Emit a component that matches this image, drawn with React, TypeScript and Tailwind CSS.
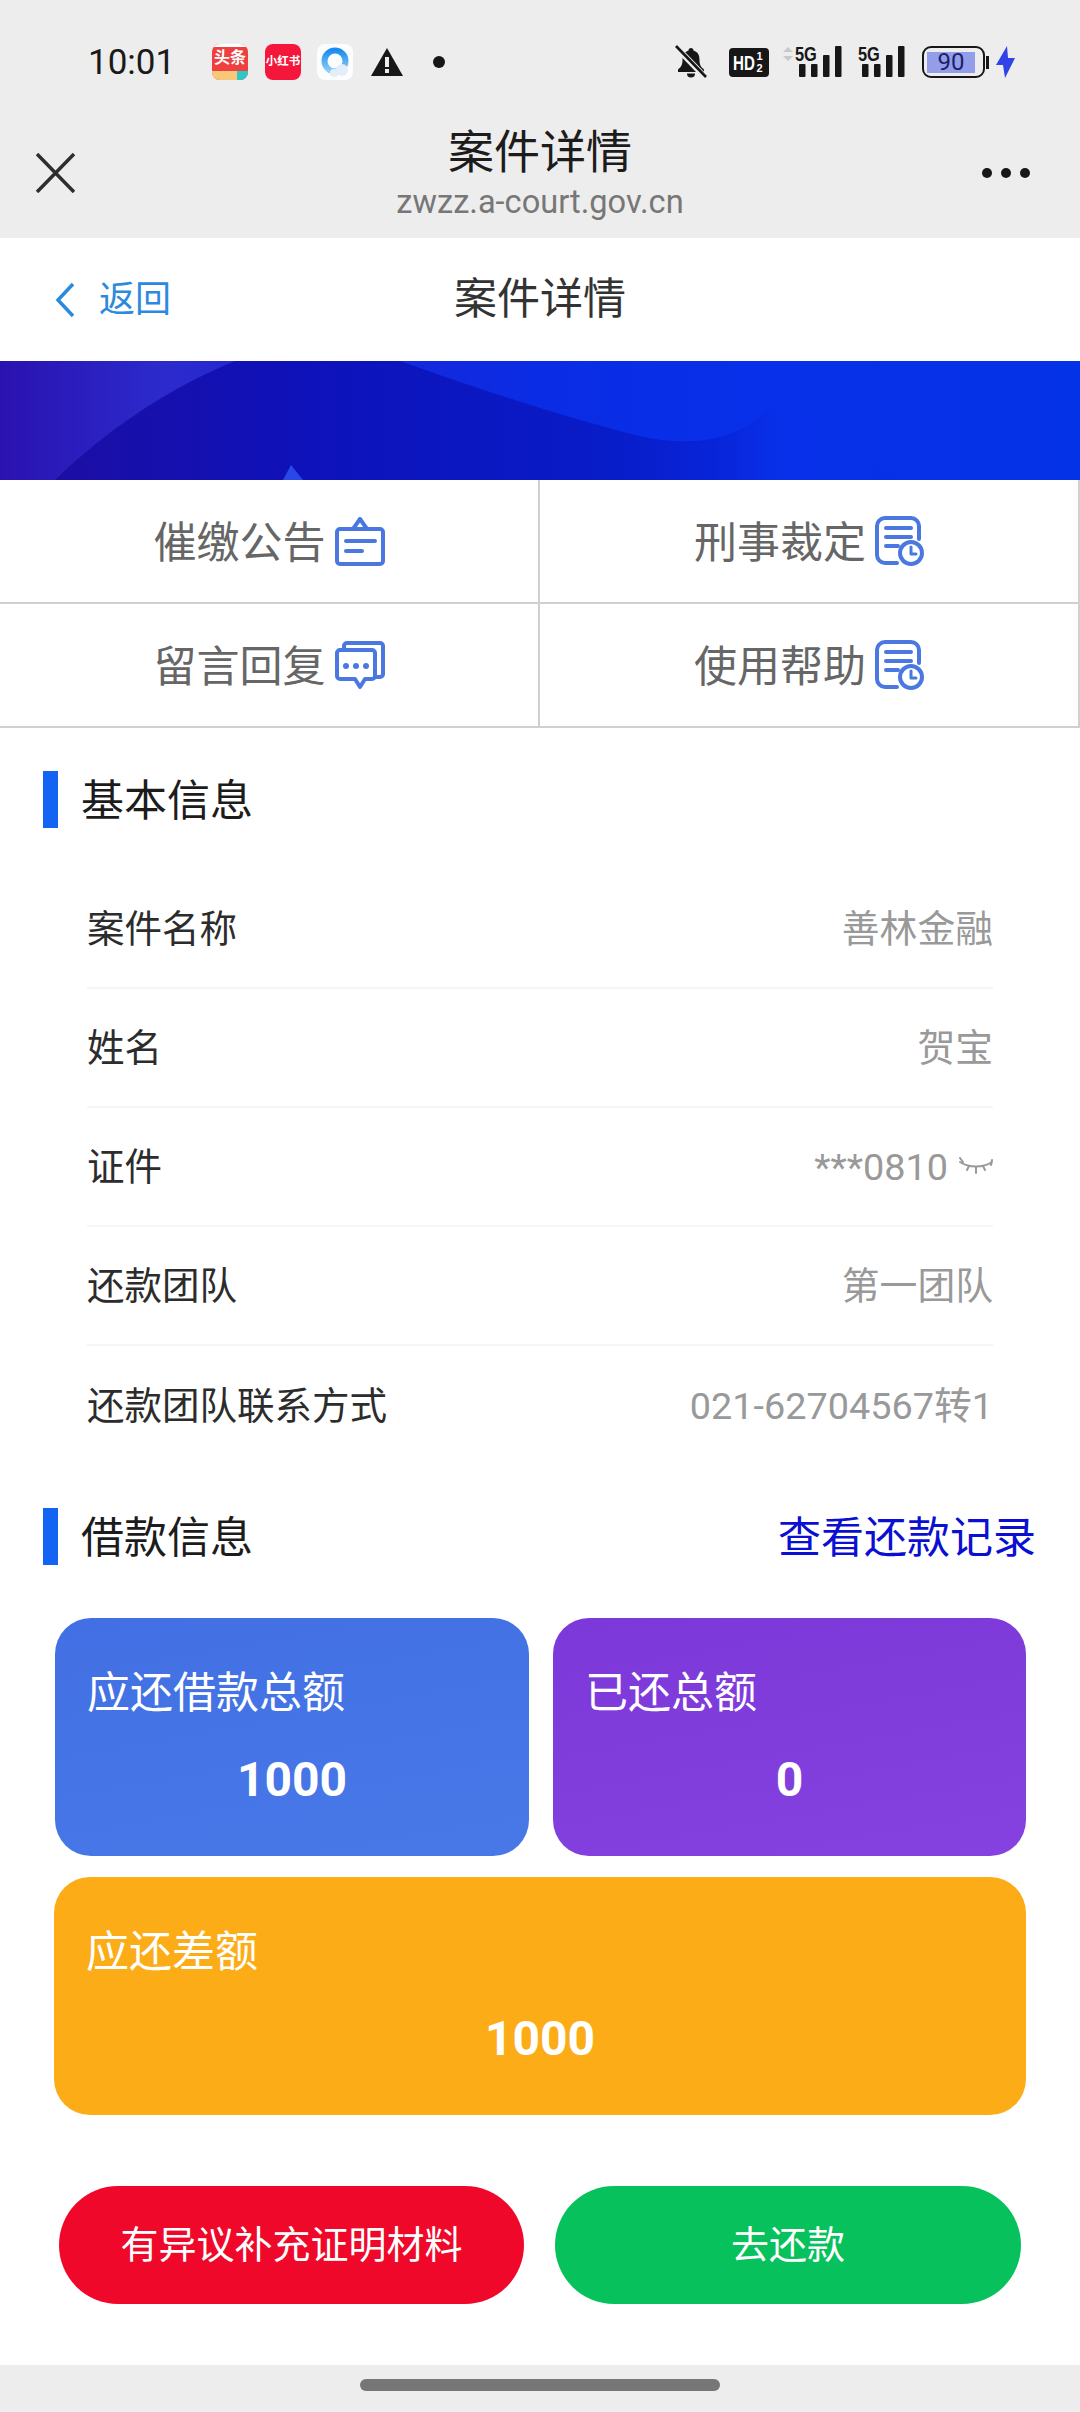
import React from "react";

const Clock = () => (
  <svg width="49" height="50" viewBox="0 0 49 50" fill="none" stroke="#4a78e0" strokeWidth="4" strokeLinecap="round" strokeLinejoin="round">
    <path d="M22 47H10a8 8 0 0 1-8-8V10a8 8 0 0 1 8-8h26a8 8 0 0 1 8 8v13" />
    <path d="M11 12h25M11 21h25M11 30h12" />
    <circle cx="36" cy="37" r="11" />
    <path d="M36 31v7h5" strokeWidth="3" />
  </svg>
);
const Notice = () => (
  <svg width="50" height="49" viewBox="0 0 50 49" fill="none" stroke="#4a78e0" strokeWidth="4" strokeLinecap="round" strokeLinejoin="round">
    <path d="M5 12h40a3 3 0 0 1 3 3v29a3 3 0 0 1-3 3H5a3 3 0 0 1-3-3V15a3 3 0 0 1 3-3Z" />
    <path d="M18 12l7-10 7 10" />
    <path d="M11 24h29M11 34h16" />
  </svg>
);
const Chat = () => (
  <svg width="50" height="49" viewBox="0 0 50 49" fill="none" stroke="#4a78e0" strokeWidth="4" strokeLinecap="round" strokeLinejoin="round">
    <path d="M9 8V5a3 3 0 0 1 3-3h33a3 3 0 0 1 3 3v28a3 3 0 0 1-3 3h-5" />
    <path d="M5 9h32a3 3 0 0 1 3 3v23a3 3 0 0 1-3 3h-7l-5 8-5-8H5a3 3 0 0 1-3-3V12a3 3 0 0 1 3-3Z" />
    <circle cx="11" cy="25" r="3" fill="#4a78e0" stroke="none" />
    <circle cx="21" cy="25" r="3" fill="#4a78e0" stroke="none" />
    <circle cx="31" cy="25" r="3" fill="#4a78e0" stroke="none" />
  </svg>
);

const Signal = ({ arrows }: { arrows?: boolean }) => (
  <svg className="overflow-visible" width={arrows ? 60 : 47} height="36" viewBox={arrows ? "-13 0 60 36" : "0 0 47 36"}>
    {arrows && <path d="M-7 3l5 5h-10ZM-7 17l5-5h-10Z" fill="#c9c9c9" />}
    <text transform="translate(0 17) scale(0.82 1)" fontFamily="Liberation Sans" fontWeight="700" fontSize="20" fill="#171717">5G</text>
    <rect x="4" y="20" width="6.500" height="13" rx="1" fill="#171717" />
    <rect x="16" y="20" width="6.500" height="13" rx="1" fill="#171717" />
    <rect x="28" y="11" width="6.500" height="22" rx="1" fill="#171717" />
    <rect x="40" y="2" width="6.500" height="31" rx="1" fill="#171717" />
  </svg>
);

const StatusBar = () => (
  <div className="flex h-[36px] items-center justify-between pl-[88px] pr-[65px]">
    <div className="flex items-center">
      <span className="w-[124px] text-[35px] leading-none text-[#1a1a1a]">10:01</span>
      <div className="relative flex h-[36px] w-[36px] flex-col items-center overflow-hidden rounded-[8px] bg-[#ee4040] pt-[2px]">
        <span className="absolute top-0 h-[3px] w-full bg-white" />
        <span className="mt-[4px] text-[16px] font-bold leading-none text-white">头条</span>
        <span className="absolute bottom-0 h-[9px] w-full bg-[linear-gradient(90deg,#f8c878_70%,#2cc7c7_70%)]" />
      </div>
      <div className="ml-[17px] flex h-[36px] w-[36px] items-center justify-center rounded-[8px] bg-[#f5173b]">
        <span className="text-[11.500px] font-bold leading-none text-white">小红书</span>
      </div>
      <svg className="ml-[16px]" width="36" height="36" viewBox="0 0 36 36">
        <defs>
          <linearGradient id="qq" x1="0" y1="0" x2="0" y2="1">
            <stop offset="0" stopColor="#1a8cf0" />
            <stop offset="1" stopColor="#8fd0f8" />
          </linearGradient>
        </defs>
        <rect width="36" height="36" rx="8" fill="#fbfdff" />
        <circle cx="18" cy="17" r="10.500" fill="none" stroke="url(#qq)" strokeWidth="6" />
        <circle cx="25" cy="26" r="6" fill="#e3eef8" />
        <circle cx="17" cy="29" r="4" fill="#e3eef8" />
      </svg>
      <svg className="ml-[18px]" width="32" height="30" viewBox="0 0 32 30">
        <path d="M16 1 32 29H0Z" fill="#171717" />
        <rect x="14" y="10" width="4" height="10" fill="#ededed" />
        <rect x="14" y="22" width="4" height="4" fill="#ededed" />
      </svg>
      <span className="ml-[30px] h-[12px] w-[12px] rounded-full bg-[#171717]" />
    </div>
    <div className="flex items-center">
      <svg width="32" height="34" viewBox="0 0 32 34">
        <path d="M16 3c-1.500 0-2.500 1-2.500 2.500C9 7 7.500 10 7.500 15c0 5-1.500 7-4.500 9.500V27h26v-2.500c-3-2.500-4.500-4.500-4.500-9.500 0-5-1.500-8-6-9.500C18.500 4 17.500 3 16 3Z" fill="#171717" />
        <path d="M12 28.500a4 4 0 0 0 8 0Z" fill="#171717" />
        <path d="M1 2 31 33" stroke="#ededed" strokeWidth="6" />
        <path d="M1 1 31 32" stroke="#171717" strokeWidth="2.600" />
      </svg>
      <svg className="ml-[22px] overflow-visible" width="40" height="29" viewBox="0 0 40 29">
        <rect width="40" height="29" rx="4" fill="#171717" />
        <text transform="translate(4 22) scale(0.72 1)" fontFamily="Liberation Sans" fontWeight="700" fontSize="21" fill="#fff">HD</text>
        <text x="27.500" y="12" fontFamily="Liberation Sans" fontWeight="700" fontSize="11" fill="#fff">1</text>
        <text x="27.500" y="24" fontFamily="Liberation Sans" fontWeight="700" fontSize="11" fill="#fff">2</text>
      </svg>
      <div className="ml-[13px]"><Signal arrows /></div>
      <div className="ml-[16px]"><Signal /></div>
      <div className="relative ml-[17px] flex h-[32px] w-[63px] items-center rounded-[9px] border-[2.500px] border-[#171717] px-[3px]">
        <div className="flex h-[21px] w-[48px] items-center justify-center bg-[#939eea] text-[24px] leading-none text-[#1c2266]">90</div>
      </div>
      <span className="ml-[1px] h-[13px] w-[3px] bg-[#171717]" />
      <svg className="ml-[7px]" width="19" height="32" viewBox="0 0 19 32">
        <path d="M11 0 0 19h7l2 13 10-20h-7Z" fill="#2f43e6" />
      </svg>
    </div>
  </div>
);

const GridCell = ({ label, icon }: { label: string; icon: React.ReactNode }) => (
  <div className="flex h-[124px] items-center justify-center gap-[9px] border-b-[2px] border-r-[2px] border-[#d0d0d0]">
    <span className="pt-[5px] text-[43px] leading-none text-[#666666]">{label}</span>
    {icon}
  </div>
);

const SectionHead = ({ title, link }: { title: string; link?: string }) => (
  <div className="flex h-[57px] items-center pl-[43px] pr-[44px]">
    <span className="h-[57px] w-[15px] bg-[#1464f4]" />
    <span className="ml-[23px] flex-1 pt-[4px] text-[43px] leading-none text-[#1c1c1c]">{title}</span>
    {link && <span className="pt-[3px] text-[43px] leading-none text-[#0a0fd2]">{link}</span>}
  </div>
);

const Row = ({ label, value, last, eye }: { label: string; value: string; last?: boolean; eye?: boolean }) => (
  <div className={`mx-[87px] flex h-[119px] items-center justify-between ${last ? "" : "border-b-[2px] border-[#f5f5f5]"}`}>
    <span className="pt-[2px] text-[37.500px] leading-none text-[#2c2c2c]">{label}</span>
    <span className="flex items-center gap-[11px] pt-[2px] text-[37.800px] leading-none text-[#999999]">
      {value}
      {eye && (
        <svg width="34" height="20" viewBox="0 0 34 20" fill="none" stroke="#999" strokeWidth="2" strokeLinecap="round">
          <path d="M1 5c9 6 23 6 32 0M4 5 1 1M33 3l-1 5M10 9 8 13M17 10v6M24 9l2 4" />
        </svg>
      )}
    </span>
  </div>
);

const Card = ({ label, value, className }: { label: string; value: string; className: string }) => (
  <div className={`flex h-[238px] flex-col rounded-[36px] pl-[32px] pt-[47px] text-white ${className}`}>
    <span className="h-[56px] text-[43px] leading-[56px]">{label}</span>
    <span className="mt-[31px] pr-[32px] text-center text-[48px] font-bold leading-[56px]">{value}</span>
  </div>
);

export default function App() {
  return (
    <div className="flex h-[2412px] w-[1080px] flex-col overflow-hidden bg-white font-['Roboto','Noto_Sans_CJK_SC',sans-serif]">
      <header className="h-[238px] bg-[#ededed] pt-[44px]">
        <StatusBar />
        <div className="mt-[45px] grid grid-cols-[1fr_auto_1fr] items-center px-[36px]">
          <svg width="39" height="40" viewBox="0 0 39 40" stroke="#2e2e2e" strokeWidth="3.500">
            <path d="M1 1 38 39M38 1 1 39" />
          </svg>
          <div className="flex flex-col items-center">
            <span className="text-[46px] leading-[54px] text-[#1c1c1c]">案件详情</span>
            <span className="mt-[5px] text-[32.600px] leading-[36px] text-[#777777]">zwzz.a-court.gov.cn</span>
          </div>
          <div className="mr-[14px] flex justify-end gap-[9px]">
            <span className="h-[10px] w-[10px] rounded-full bg-[#171717]" />
            <span className="h-[10px] w-[10px] rounded-full bg-[#171717]" />
            <span className="h-[10px] w-[10px] rounded-full bg-[#171717]" />
          </div>
        </div>
      </header>

      <nav className="grid h-[123px] grid-cols-[1fr_auto_1fr] items-center pl-[55px]">
        <div className="flex items-center text-[36px] leading-none text-[#2b8ade]">
          <svg width="20" height="36" viewBox="0 0 20 36" fill="none" stroke="#2b8ade" strokeWidth="3.500">
            <path d="M18 2 3 18l15 16" />
          </svg>
          <span className="ml-[24px]">返回</span>
        </div>
        <span className="-ml-[55px] text-[43px] leading-none text-[#333333]">案件详情</span>
        <span />
      </nav>

      <svg className="h-[119px] w-[1080px] shrink-0" viewBox="0 0 1080 119" preserveAspectRatio="none">
        <defs>
          <linearGradient id="base" x1="0" y1="0" x2="1" y2="0">
            <stop offset="0" stopColor="#2a12b0" />
            <stop offset="0.15" stopColor="#2c2acc" />
            <stop offset="0.3" stopColor="#1c26d8" />
            <stop offset="0.5" stopColor="#0a2ce4" />
            <stop offset="0.72" stopColor="#0830ea" />
            <stop offset="1" stopColor="#0432e6" />
          </linearGradient>
          <linearGradient id="dark" gradientUnits="userSpaceOnUse" x1="55" y1="0" x2="900" y2="0">
            <stop offset="0" stopColor="#1c0ea4" />
            <stop offset="0.3" stopColor="#0e12ba" />
            <stop offset="0.65" stopColor="#081cc8" />
            <stop offset="0.78" stopColor="#0824d8" />
            <stop offset="0.86" stopColor="#0830ea" />
            <stop offset="1" stopColor="#0630e8" />
          </linearGradient>
        </defs>
        <rect width="1080" height="119" fill="url(#base)" />
        <path d="M55 119C90 85 150 35 235 0H400C470 25 560 55 640 75C690 87 745 80 775 40L900 119Z" fill="url(#dark)" />
        <path d="M283 119 291 104 303 119Z" fill="#2a48e8" />
      </svg>

      <div className="grid shrink-0 grid-cols-[540px_540px]">
        <GridCell label="催缴公告" icon={<Notice />} />
        <GridCell label="刑事裁定" icon={<Clock />} />
        <GridCell label="留言回复" icon={<Chat />} />
        <GridCell label="使用帮助" icon={<Clock />} />
      </div>

      <section className="mt-[43px]">
        <SectionHead title="基本信息" />
        <div className="mt-[42px]">
          <Row label="案件名称" value="善林金融" />
          <Row label="姓名" value="贺宝" />
          <Row label="证件" value="***0810" eye />
          <Row label="还款团队" value="第一团队" />
          <Row label="还款团队联系方式" value="021-62704567转1" last />
        </div>
      </section>

      <section className="mt-[43px]">
        <SectionHead title="借款信息" link="查看还款记录" />
        <div className="mt-[53px] px-[54px]">
          <div className="flex justify-between">
            <div className="ml-[1px] w-[474px]">
              <Card label="应还借款总额" value="1000" className="bg-[linear-gradient(170deg,#4270e4,#4878e8)]" />
            </div>
            <div className="w-[473px]">
              <Card label="已还总额" value="0" className="bg-[linear-gradient(170deg,#7c38d8,#8542e0)]" />
            </div>
          </div>
          <div className="mt-[21px]">
            <Card label="应还差额" value="1000" className="bg-[#fcac16]" />
          </div>
        </div>
      </section>

      <div className="mt-[71px] flex justify-between px-[59px]">
        <button className="h-[118px] w-[465px] rounded-full bg-[#f0082a] text-[38px] text-white">有异议补充证明材料</button>
        <button className="h-[118px] w-[466px] rounded-full bg-[#07c15c] text-[38px] text-white">去还款</button>
      </div>

      <div className="mt-auto flex h-[47px] justify-center bg-[#ededed] pt-[14px]">
        <span className="h-[12px] w-[360px] rounded-full bg-[#767676]" />
      </div>
    </div>
  );
}
